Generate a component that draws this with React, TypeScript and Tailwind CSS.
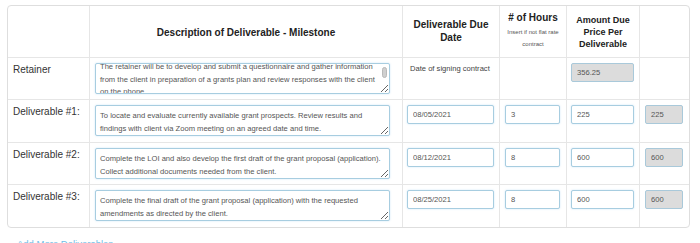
import { useEffect, useRef } from "react";

const rowGrid = "grid grid-cols-[82px_313px_97px_67px_73px_49px]";
const cellBase = "border-r border-[#e6e6e6] last:border-r-0 px-[5px]";

function Area({ text, scroll = 0, scrollbar = false }: { text: string; scroll?: number; scrollbar?: boolean }) {
  const ref = useRef<HTMLTextAreaElement>(null);
  useEffect(() => {
    if (ref.current) ref.current.scrollTop = scroll;
  }, [scroll]);
  return (
    <div className="relative w-[295px] h-[31px]">
      <textarea
        ref={ref}
        readOnly
        value={text}
        className="block w-full h-full whitespace-pre overflow-hidden border border-[#a7cde0] rounded-[2px] bg-white pl-[4px] pr-[4px] pt-[4px] text-[7.6px] leading-[12.5px] text-[#555] shadow-[0_0_2px_rgba(102,175,233,0.35)] outline-none"
      />
      {scrollbar && (
        <div className="absolute right-[3px] top-[4px] w-[5px] h-[11px] rounded-[3px] bg-[#cfcfcf] border border-[#b9b9b9]" />
      )}
    </div>
  );
}

function Field({ value, w, gray = false }: { value: string; w: string; gray?: boolean }) {
  return (
    <input
      readOnly
      value={value}
      className={`${w} block h-[19px] border rounded-[2px] px-[5px] text-[7.6px] text-[#555] outline-none ${
        gray
          ? "bg-[#dcdcdc] border-[#a9c9da]"
          : "bg-white border-[#a7cde0] shadow-[0_0_2px_rgba(102,175,233,0.35)]"
      }`}
    />
  );
}

const rows = [
  {
    label: "Deliverable #1:",
    text: "To locate and evaluate currently available grant prospects. Review results and\nfindings with client via Zoom meeting on an agreed date and time.",
    date: "08/05/2021",
    hours: "3",
    amount: "225",
    total: "225",
    h: "h-[43px]",
  },
  {
    label: "Deliverable #2:",
    text: "Complete the LOI and also develop the first draft of the grant proposal (application).\nCollect additional documents needed from the client.",
    date: "08/12/2021",
    hours: "8",
    amount: "600",
    total: "600",
    h: "h-[42px]",
  },
  {
    label: "Deliverable #3:",
    text: "Complete the final draft of the grant proposal (application) with the requested\namendments as directed by the client.",
    date: "08/25/2021",
    hours: "8",
    amount: "600",
    total: "600",
    h: "h-[42px]",
  },
];

export default function App() {
  return (
    <div className="w-[700px] h-[243px] overflow-hidden bg-white font-['Liberation_Sans',Arial,sans-serif] text-[#333]">
      <div className="pt-[5px] pl-[7px]">
        <div className="w-[683px] border border-[#dedede] rounded-[4px]">
          {/* header */}
          <div className={`${rowGrid} h-[52px] border-b border-[#e6e6e6]`}>
            <div className={cellBase} />
            <div className={`${cellBase} flex items-center justify-center pt-[2px]`}>
              <span className="text-[10px] font-bold text-[#222]">Description of Deliverable - Milestone</span>
            </div>
            <div className={`${cellBase} flex items-center justify-center pb-[1px]`}>
              <span className="text-[10px] leading-[13px] font-bold text-[#222] text-center">
                Deliverable Due
                <br />
                Date
              </span>
            </div>
            <div className={`${cellBase} flex flex-col items-center justify-center pb-[3px]`}>
              <span className="text-[10px] leading-[14px] font-bold text-[#222]">#&nbsp;of Hours</span>
              <span className="text-[6px] leading-[12px] text-[#555] text-center mt-[1px]">
                Insert if not flat rate
                <br />
                contract
              </span>
            </div>
            <div className={`${cellBase} flex items-center justify-center`}>
              <span className="text-[9px] leading-[12px] font-bold text-[#222] text-center">
                Amount Due
                <br />
                Price Per
                <br />
                Deliverable
              </span>
            </div>
            <div className={cellBase} />
          </div>

          {/* retainer */}
          <div className={`${rowGrid} h-[42px] border-b border-[#e6e6e6]`}>
            <div className={`${cellBase} pt-[5px] text-[10px] leading-[13px]`}>Retainer</div>
            <div className={`${cellBase} pt-[5px]`}>
              <Area
                text={
                  "The retainer will be to develop and submit a questionnaire and gather information\nfrom the client in preparation of a grants plan and review responses with the client\non the phone."
                }
                scroll={7}
                scrollbar
              />
            </div>
            <div className={`${cellBase} pt-[5px] pl-[7px] text-[7.6px] leading-[12px] text-[#444]`}>
              Date of signing contract
            </div>
            <div className={cellBase} />
            <div className={`${cellBase} pt-[5px] pl-[4px]`}>
              <Field value="356.25" w="w-[63px]" gray />
            </div>
            <div className={cellBase} />
          </div>

          {rows.map((r, i) => (
            <div
              key={r.label}
              className={`${rowGrid} ${r.h} ${i < rows.length - 1 ? "border-b border-[#e6e6e6]" : ""}`}
            >
              <div className={`${cellBase} pt-[5px] text-[10px] leading-[13px]`}>{r.label}</div>
              <div className={`${cellBase} pt-[5px]`}>
                <Area text={r.text} />
              </div>
              <div className={`${cellBase} pt-[5px] pl-[4px]`}>
                <Field value={r.date} w="w-[87px]" />
              </div>
              <div className={`${cellBase} pt-[5px]`}>
                <Field value={r.hours} w="w-[55px]" />
              </div>
              <div className={`${cellBase} pt-[5px] pl-[4px]`}>
                <Field value={r.amount} w="w-[63px]" />
              </div>
              <div className={`${cellBase} pt-[5px]`}>
                <Field value={r.total} w="w-[38px]" gray />
              </div>
            </div>
          ))}
        </div>
        <div className="mt-[9px] pl-[10px] text-[9.5px] leading-[14px] text-[#6fbde6]">Add More Deliverables</div>
      </div>
    </div>
  );
}
